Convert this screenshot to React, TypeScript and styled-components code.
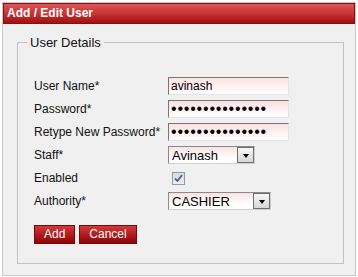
import React, { useState } from 'react'
import styled, { createGlobalStyle } from 'styled-components'

const GlobalStyle = createGlobalStyle`
  body {
    margin: 0;
    background: #ffffff;
    font-family: 'Liberation Sans', Arial, sans-serif;
  }
`

const Panel = styled.div`
  margin: 2px;
  width: 352px;
  border: 1px solid #c9c9c9;
  background: #f0f0f0;
`

const Header = styled.div`
  height: 19px;
  border: 1px solid #8c0d0d;
  background: linear-gradient(#dc5556, #c63437 50%, #a30e0f);
  color: #ffffff;
  font-size: 12px;
  font-weight: bold;
  line-height: 19px;
  padding-left: 3px;
`

const Body = styled.div`
  padding: 11px 11px 11px 14px;
`

const Fieldset = styled.fieldset`
  margin: 0;
  border: 1px solid #c2c2c2;
  padding: 27px 16px 19px 16px;
`

const Legend = styled.legend`
  font-size: 13px;
  line-height: 15px;
  padding: 0 3px;
  margin-left: -7px;
  color: #111;
`

const Form = styled.div`
  display: grid;
  grid-template-columns: 134px auto;
  grid-auto-rows: 18px;
  row-gap: 5px;
  align-items: center;
`

const Label = styled.label`
  font-size: 12px;
  color: #111;
`

const TextInput = styled.input`
  box-sizing: border-box;
  width: 121px;
  height: 18px;
  margin: 0;
  padding: 0 2px;
  border: 1px solid #e4e4e4;
  border-top-color: #777;
  border-left-color: #777;
  background: linear-gradient(#fbe1e1, #fff3f3 60%, #ffffff);
  font-family: 'Liberation Sans', Arial, sans-serif;
  font-size: 12px;
  color: #000;
  outline: none;
  &[type='password'] {
    font-size: 16px;
    letter-spacing: 0.8px;
  }
`

const SelectBox = styled.div<{ $width: number }>`
  box-sizing: border-box;
  display: flex;
  width: ${(p) => p.$width}px;
  height: 18px;
  border: 1px solid #8a8a8a;
  border-right-color: #d0d0d0;
  border-bottom-color: #d0d0d0;
  background: linear-gradient(#fbe3e3, #ffffff 70%);
`

const Select = styled.select`
  flex: 1;
  min-width: 0;
  appearance: none;
  border: none;
  background: transparent;
  margin: 0;
  padding: 0 3px;
  font-family: 'Liberation Sans', Arial, sans-serif;
  font-size: 13px;
  color: #000;
  outline: none;
`

const Arrow = styled.span`
  box-sizing: border-box;
  width: 17px;
  height: 16px;
  display: flex;
  align-items: center;
  justify-content: center;
  border: 1px solid #6e6e6e;
  background: linear-gradient(#f8f8f8, #d6d6d6);
  &::after {
    content: '';
    border-left: 3px solid transparent;
    border-right: 3px solid transparent;
    border-top: 4px solid #000;
    margin-top: 2px;
  }
`

const CheckWrap = styled.label`
  margin-left: 4px;
  width: 13px;
  height: 13px;
  box-sizing: border-box;
  border: 1px solid #8f9aa8;
  background: linear-gradient(#d8dbe0, #eceef1);
  display: flex;
  align-items: center;
  justify-content: center;
  input {
    display: none;
  }
`

const Buttons = styled.div`
  display: flex;
  gap: 4px;
  margin-top: 15px;
`

const Button = styled.button`
  height: 19px;
  margin: 0;
  padding: 0 9px;
  border: 1px solid #7a0606;
  background: linear-gradient(#cf3b3c, #b31b1c 50%, #8d0405);
  color: #ffffff;
  font-family: 'Liberation Sans', Arial, sans-serif;
  font-size: 12px;
  line-height: 17px;
  cursor: pointer;
`

const App: React.FC = () => {
  const [enabled, setEnabled] = useState(true)
  return (
    <>
      <GlobalStyle />
      <Panel>
        <Header>Add / Edit User</Header>
        <Body>
          <Fieldset>
            <Legend>User Details</Legend>
            <Form>
              <Label>User Name*</Label>
              <TextInput defaultValue="avinash" />
              <Label>Password*</Label>
              <TextInput type="password" defaultValue="avinash12345678" />
              <Label>Retype New Password*</Label>
              <TextInput type="password" defaultValue="avinash12345678" />
              <Label>Staff*</Label>
              <SelectBox $width={87}>
                <Select defaultValue="Avinash">
                  <option>Avinash</option>
                </Select>
                <Arrow />
              </SelectBox>
              <Label>Enabled</Label>
              <CheckWrap>
                <input
                  type="checkbox"
                  checked={enabled}
                  onChange={(e) => setEnabled(e.target.checked)}
                />
                {enabled && (
                  <svg width="9" height="9" viewBox="0 0 9 9">
                    <path d="M1 4.5 L3.5 7 L8 1" fill="none" stroke="#4a5f8c" strokeWidth="1.8" />
                  </svg>
                )}
              </CheckWrap>
              <Label>Authority*</Label>
              <SelectBox $width={103}>
                <Select defaultValue="CASHIER">
                  <option>CASHIER</option>
                  <option>ADMIN</option>
                </Select>
                <Arrow />
              </SelectBox>
            </Form>
            <Buttons>
              <Button>Add</Button>
              <Button>Cancel</Button>
            </Buttons>
          </Fieldset>
        </Body>
      </Panel>
    </>
  )
}

export default App
